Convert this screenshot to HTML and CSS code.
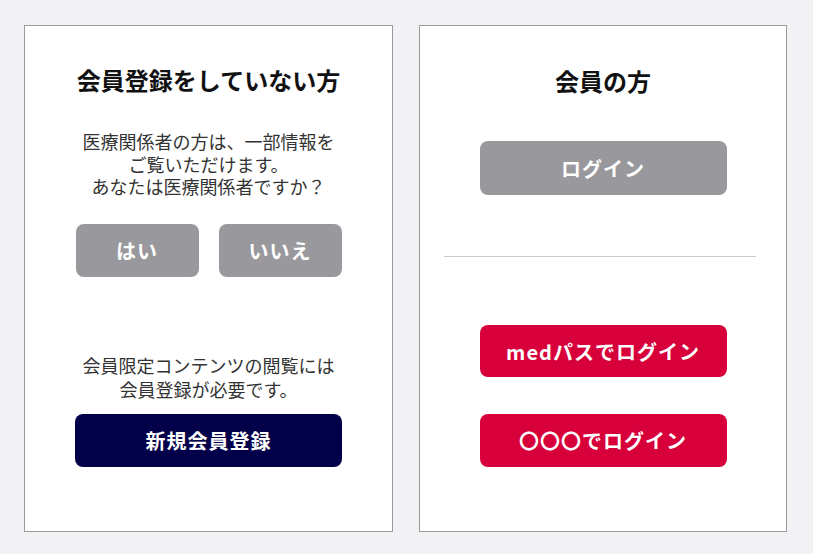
FILE: index.html
```html
<!DOCTYPE html>
<html lang="ja">
<head>
<meta charset="utf-8">
<title>会員ログイン</title>
<link rel="stylesheet" href="styles.css">
</head>
<body>
<main class="page">
  <section class="panel panel-guest">
    <h2 class="panel-title">会員登録をしていない方</h2>
    <p class="note note-pro">医療関係者の方は、一部情報を<br>ご覧いただけます。<br>あなたは医療関係者ですか？</p>
    <div class="choice">
      <a class="btn btn-gray btn-half" href="#">はい</a>
      <a class="btn btn-gray btn-half" href="#">いいえ</a>
    </div>
    <p class="note note-member">会員限定コンテンツの閲覧には<br>会員登録が必要です。</p>
    <a class="btn btn-navy btn-wide" href="#">新規会員登録</a>
  </section>
  <section class="panel panel-member">
    <h2 class="panel-title">会員の方</h2>
    <a class="btn btn-gray btn-login" href="#">ログイン</a>
    <hr class="divider">
    <a class="btn btn-red btn-login btn-med" href="#">medパスでログイン</a>
    <a class="btn btn-red btn-login btn-other" href="#">〇〇〇でログイン</a>
  </section>
</main>
</body>
</html>
```
FILE: styles.css
```css
html, body {
  margin: 0;
  padding: 0;
  background: #f2f2f4;
  font-family: "Noto Sans CJK JP", "Noto Sans", sans-serif;
}
.page {
  display: grid;
  grid-template-columns: 369px 368px;
  column-gap: 26px;
  padding: 25px 0 0 24px;
}
.panel {
  box-sizing: border-box;
  height: 507px;
  background: #fff;
  border: 1px solid #9b9b9f;
  display: flex;
  flex-direction: column;
  align-items: center;
}
.panel-title {
  margin: 0;
  font-size: 24px;
  line-height: 34px;
  font-weight: 700;
  color: #111;
}
.panel-guest { padding-top: 37px; }
.panel-member { padding-top: 38px; }
.note {
  margin: 0;
  font-size: 18px;
  font-weight: 400;
  color: #333;
  text-align: center;
}
.note-pro { margin-top: 33px; line-height: 22.5px; }
.note-member { margin-top: 76px; line-height: 24px; }
.choice {
  display: flex;
  gap: 20px;
  margin-top: 26px;
}
.btn {
  box-sizing: border-box;
  display: flex;
  align-items: center;
  justify-content: center;
  height: 53px;
  border-radius: 8px;
  color: #fff;
  font-size: 20px;
  font-weight: 700;
  letter-spacing: 1px;
  text-decoration: none;
}
.btn-gray { background: #99989d; }
.btn-navy { background: #020048; }
.btn-red { background: #d7003a; }
.btn-half { width: 123px; }
.btn-wide { width: 267px; margin-top: 13px; }
.btn-login { width: 247px; margin-top: 43px; height: 54px; }
.btn-med { margin-top: 68px; height: 52px; }
.btn-other { margin-top: 37px; height: 53px; }
.divider {
  align-self: flex-start;
  margin: 61px 0 0 24px;
  width: 312px;
  height: 1px;
  border: 0;
  background: #cccccf;
}
```
